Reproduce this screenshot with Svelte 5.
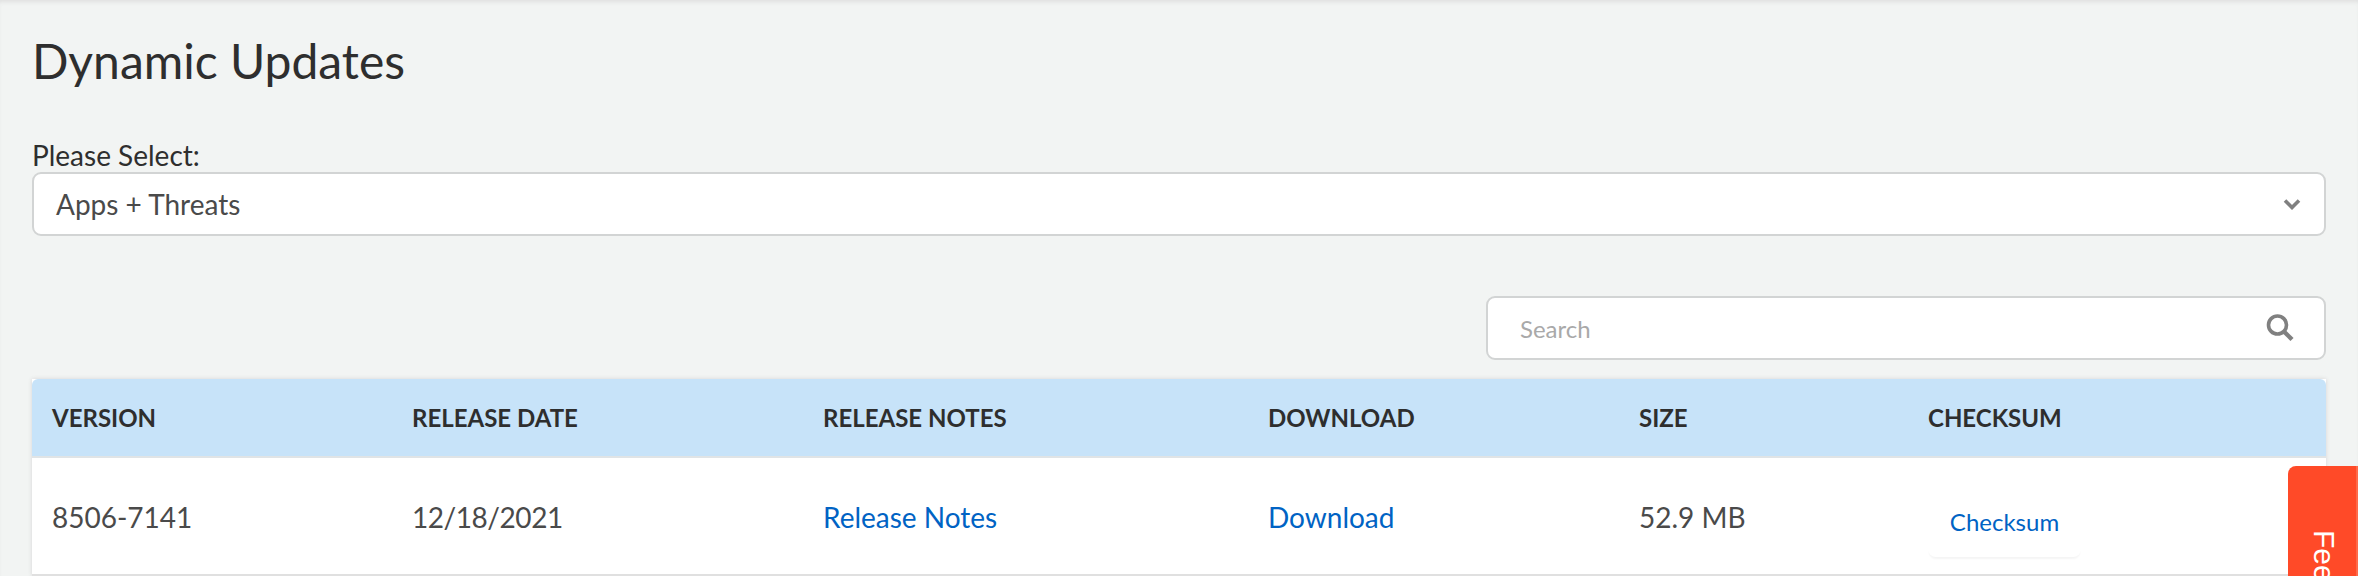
<script>
  const columns = ['Version', 'Release Date', 'Release Notes', 'Download', 'Size', 'Checksum'];
</script>

<div class="page">
  <h1>Dynamic Updates</h1>
  <label class="field-label" for="sel">Please Select:</label>
  <div class="select" id="sel">
    <span>Apps + Threats</span>
    <svg width="18" height="12" viewBox="0 0 18 12"><path d="M2 2.5l7 7 7-7" fill="none" stroke="#808080" stroke-width="3.6"/></svg>
  </div>
  <div class="search-row">
    <div class="search">
      <span>Search</span>
      <svg width="30" height="30" viewBox="0 0 30 30"><circle cx="12.5" cy="12" r="9" fill="none" stroke="#808080" stroke-width="3.6"/><path d="M19 18.5l8 8" fill="none" stroke="#808080" stroke-width="4.4"/></svg>
    </div>
  </div>
  <div class="table">
    <div class="row head">
      {#each columns as c}<div class="cell">{c}</div>{/each}
    </div>
    <div class="row body">
      <div class="cell">8506-7141</div>
      <div class="cell date">12/18/2021</div>
      <div class="cell"><a href="#n">Release Notes</a></div>
      <div class="cell"><a href="#d">Download</a></div>
      <div class="cell">52.9 MB</div>
      <div class="cell"><a class="chk" href="#c">Checksum</a></div>
    </div>
  </div>
</div>
<div class="feedback"><span>Feedback</span></div>

<style>
  :global(body) { margin: 0; background: #f2f4f3; overflow: hidden; }
  .page {
    height: 576px; box-sizing: border-box; padding: 33px 32px 0; overflow: hidden;
    font-family: Lato, "Open Sans", sans-serif; color: #2e2e2e;
    box-shadow: inset 0 4px 4px -2px #dfdfdf;
  }
  h1 { margin: 0; font-size: 48px; line-height: 56px; font-weight: 400; }
  .field-label { display: block; margin-top: 49px; font-size: 28px; line-height: 34px; }
  .select, .search {
    box-sizing: border-box; height: 64px; background: #fff;
    border: 2px solid #d2d4d4; border-radius: 9px;
    display: flex; align-items: center; justify-content: space-between;
  }
  .select { padding: 0 23px 0 22px; font-size: 28px; color: #4a4a4a; }
  .search-row { display: flex; justify-content: flex-end; margin-top: 60px; }
  .search { width: 840px; padding: 0 29px 0 32px; font-size: 24px; color: #a9a9a9; }
  .table { margin-top: 19px; box-shadow: 0 0 4px #d5d5d5; background: #fff; }
  .row { display: grid; grid-template-columns: 360px 411px 445px 371px 289px 1fr; align-items: center; }
  .head {
    height: 79px; background: #c7e3f9; border-bottom: 2px solid #e0e4e6;
    border-radius: 6px 6px 0 0; font-size: 24px; font-weight: 700; text-transform: uppercase;
    box-sizing: border-box;
  }
  .body { height: 116px; border-bottom: 2px solid #e0e0e0; font-size: 28px; color: #4a4a4a; box-sizing: content-box; }
  .cell { padding-left: 20px; padding-top: 2px; }
  .head .cell { padding-top: 0; }
  .date { letter-spacing: -0.45px; }
  a { color: #0063c4; text-decoration: none; }
  .chk {
    display: inline-block; width: 153px; box-sizing: border-box; margin-top: 16px;
    padding: 14px 0 20px; text-align: center; font-size: 24px; line-height: 30px; border-radius: 8px;
    box-shadow: 0 3px 2px -1px #f5f5f5;
  }
  .feedback {
    position: absolute; left: 2288px; top: 466px; width: 70px; height: 110px;
    background: #ff4a28; border-radius: 8px 0 0 0; overflow: hidden;
    box-shadow: inset -2px 0 0 #ff6a4a;
  }
  .feedback span {
    position: absolute; left: 19px; top: 64px; color: #fff;
    font-family: "Liberation Sans", sans-serif; font-size: 30px; line-height: 34px;
    writing-mode: vertical-rl; white-space: nowrap;
  }
</style>
